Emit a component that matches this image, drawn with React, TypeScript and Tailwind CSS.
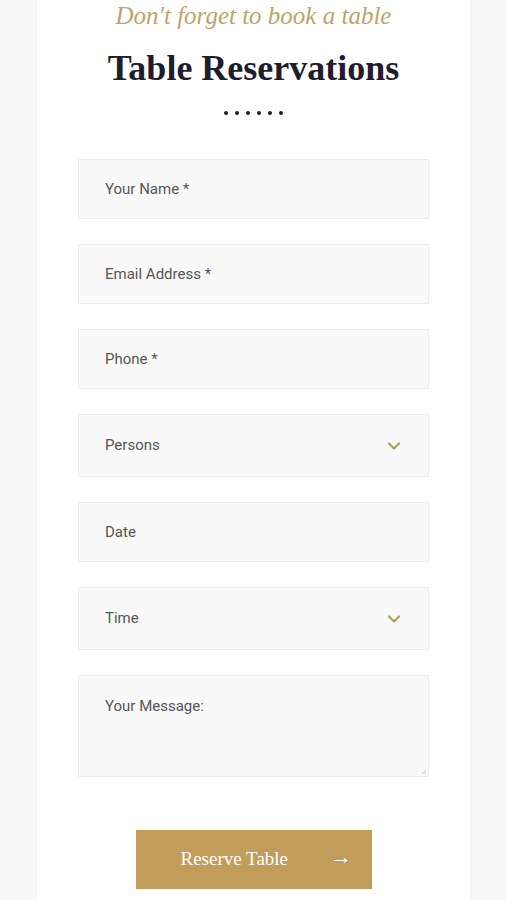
import { ChevronDown } from "lucide-react";

const serif = { fontFamily: "'Liberation Serif', 'DejaVu Serif', serif" };

function Field({ label, select, tall }: { label: string; select?: boolean; tall?: boolean }) {
  return (
    <div
      className={`relative w-full border border-[#ececec] bg-[#f9f9f9] px-[26px] text-[15px] text-[#555] ${
        tall ? "h-[102px] pt-[19px]" : select ? "h-[63px] flex items-center" : "h-[60px] flex items-center"
      }`}
      style={{ fontFamily: "Roboto, 'Liberation Sans', sans-serif" }}
    >
      <span>{label}</span>
      {select && (
        <ChevronDown className="absolute right-[24px] top-1/2 -translate-y-1/2 w-[20px] h-[20px] text-[#b89a5c]" strokeWidth={2.6} />
      )}
      {tall && (
        <svg className="absolute right-[1px] bottom-[1px]" width="6" height="6" viewBox="0 0 6 6">
          <path d="M5 1 L1 5 M5 3 L3 5" stroke="#bbb" strokeWidth="0.8" />
        </svg>
      )}
    </div>
  );
}

export default function App() {
  return (
    <div className="w-full min-h-[900px] bg-[#f8f8f8] flex">
      <div className="ml-[37px] w-[433px] min-h-[900px] bg-white shadow-[0_0_3px_rgba(0,0,0,0.06)] px-[41px]">
        {/* Heading */}
        <div className="flex flex-col items-center">
          <p className="mt-[1px] text-[25px] leading-[30px] italic text-[#bea36b]" style={serif}>
            Don't forget to book a table
          </p>
          <h1 className="mt-[16px] text-[36px] leading-[42px] font-bold text-[#1d1d2f]" style={serif}>
            Table Reservations
          </h1>
          <div className="mt-[22px] flex gap-[7px]">
            {[0, 1, 2, 3, 4, 5].map((i) => (
              <span key={i} className="w-[4px] h-[4px] rounded-full bg-[#1d1d2f]" />
            ))}
          </div>
        </div>

        {/* Form */}
        <div className="mt-[44px] flex flex-col gap-[25px]">
          <Field label="Your Name *" />
          <Field label="Email Address *" />
          <Field label="Phone *" />
          <Field label="Persons" select />
          <Field label="Date" />
          <Field label="Time" select />
          <Field label="Your Message:" tall />
        </div>

        <div className="mt-[53px] flex justify-center">
          <button className="w-[236px] h-[59px] bg-[#c29d5a] text-white flex items-center pl-[45px] gap-[42px] text-[19px]" style={serif}>
            <span>Reserve Table</span>
            <span className="text-[22px] leading-none -translate-y-[3px]">→</span>
          </button>
        </div>
      </div>
    </div>
  );
}
